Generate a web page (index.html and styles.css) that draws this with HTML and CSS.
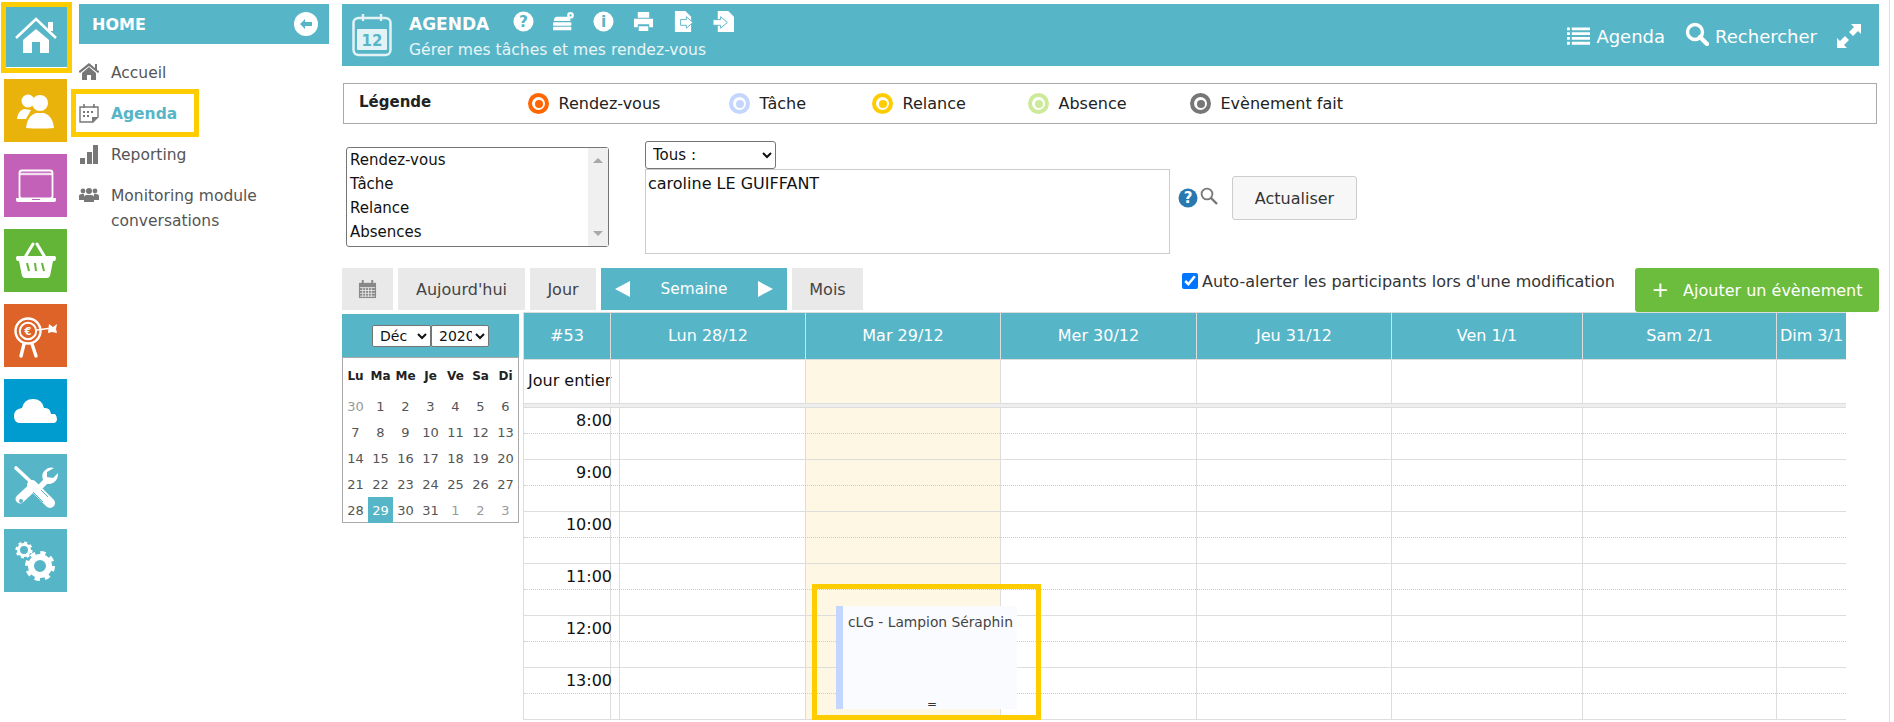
FILE: index.html
```html
<!DOCTYPE html>
<html lang="fr">
<head>
<meta charset="utf-8">
<title>Agenda</title>
<link rel="stylesheet" href="styles.css">
</head>
<body>
<div class="app">
  <nav class="rail">
    <a class="tile teal current"><svg viewBox="0 0 63 63"><path d="M12 34 32 15l20 19" class="ws" stroke-width="2.6"/><path d="M44 18h5v9h-5z" class="wf"/><path d="M19 36 32 25l13 11v13H36V38h-8v11h-9z" class="wf"/></svg><span class="frame home-frame"></span></a>
    <a class="tile amber"><svg viewBox="0 0 63 63"><circle cx="24" cy="22" r="6.5" class="wf"/><path d="M13 40c1-7 4-9 7-10l7 1-5 9z" class="wf"/><circle cx="36" cy="24" r="8" class="wf"/><path d="M22 49c1-8 4-13 10-15h8c6 2 9 7 10 15q-14 1-28 0z" class="wf"/></svg></a>
    <a class="tile purple"><svg viewBox="0 0 63 63"><rect x="15.500" y="16.500" width="33" height="28" rx="2.500" class="ws" stroke-width="1.800"/><path d="M16 20h32" class="ws" stroke-width="2.400" opacity=".8"/><path d="M12 44h40v2q0 2-2 2H14q-2 0-2-2z" class="wf"/><path d="M28 45h8v1h-8z" fill="#c360b8"/></svg></a>
    <a class="tile green"><svg viewBox="0 0 63 63"><path d="M20 30 29 15M33 15l9 15" class="ws" stroke-width="3" stroke-linecap="round"/><path d="M13 27h38q2 2 0 5h-2l-3 15q-1 2-3 2H21q-2 0-3-2l-3-15h-2q-2-3 0-5z" class="wf"/><path d="M23 34l2 8M31 34l1 8M38 34l2 8" stroke="#62b536" fill="none" stroke-width="2"/></svg></a>
    <a class="tile orange"><svg viewBox="0 0 63 63"><circle cx="24" cy="27" r="12.500" class="ws" stroke-width="2.400"/><circle cx="24" cy="27" r="8.200" class="ws" stroke-width="2"/><text x="24" y="31" class="euro">€</text><path d="M20 40l-3 12M28 40l4 12" class="ws" stroke-width="3.400" stroke-linecap="round"/><path d="M33 26 48 24" class="ws" stroke-width="1.600"/><path d="M45 20l4 3 4-3-1 5 1 4-5-1-4 1z" class="wf"/></svg></a>
    <a class="tile blue"><svg viewBox="0 0 63 63"><path d="M15 44q-5-1-5-7 0-7 8-8 2-9 11-9t11 9q6-1 7 6h4q2 2 2 5t-3 4z" class="wf"/></svg></a>
    <a class="tile teal"><svg viewBox="0 0 63 63"><path d="M12 14l15 14" class="ws" stroke-width="3.600" stroke-linecap="round"/><path d="M29 33 16 45" class="ws" stroke-width="9" stroke-linecap="round"/><circle cx="17" cy="47" r="2" fill="#57b5c8"/><path d="M28 31 46 49" class="ws" stroke-width="10" stroke-linecap="round"/><path d="M29 38l10 10M34 33l10 10" stroke="#57b5c8" fill="none" stroke-width="1"/><path d="M50 14a9 9 0 0 0-11 12L32 33l4 4 7-7a10 10 0 0 0 11-11l-5 5-6-1v-5z" class="wf"/></svg></a>
    <a class="tile teal"><svg viewBox="0 0 63 63"><circle cx="20" cy="21" r="5.500" class="ws" stroke-width="3"/><circle cx="20" cy="21" r="7.400" fill="none" stroke="#fff" stroke-width="2.400" stroke-dasharray="3 2.800"/><circle cx="36" cy="37" r="9" class="ws" stroke-width="6"/><circle cx="36" cy="37" r="13" fill="none" stroke="#fff" stroke-width="4" stroke-dasharray="5.200 5"/></svg></a>
  </nav>

  <aside class="side">
    <header class="side-head"><strong>HOME</strong>
      <svg class="back" viewBox="0 0 24 24"><circle cx="12" cy="12" r="12" fill="#fff"/><path d="M6 12l5-5v3h7v4h-7v3z" fill="#57b5c8"/></svg>
    </header>
    <ul class="side-menu">
      <li><svg viewBox="0 0 20 20"><path d="M0 9 10 1l6 5V2h2v6l2 1v1l-1 1-9-7-9 7-1-1z" class="gf"/><path d="M3 11l7-6 7 6v7h-5v-5H8v5H3z" class="gf"/></svg><span>Accueil</span></li>
      <li class="active"><svg viewBox="0 0 20 20"><path d="M1 4h18v10l-5 5H1z" fill="none" stroke="#777" stroke-width="1.400"/><path d="M5 1v4M15 1v4" stroke="#777" stroke-width="1.600"/><path d="M4 8h2v2H4zM8 8h2v2H8zM12 8h2v2h-2zM4 12h2v2H4zM8 12h2v2H8z" class="gf"/><path d="M13 19v-5h6z" class="gf"/></svg><span>Agenda</span><span class="frame agenda-frame"></span></li>
      <li><svg viewBox="0 0 20 20"><path d="M1 14h5v6H1zM8 8h5v12H8zM14 1h5v19h-5z" class="gf"/></svg><span>Reporting</span></li>
      <li><svg viewBox="0 0 20 20"><circle cx="4" cy="6" r="2.400" class="gf"/><circle cx="16" cy="6" r="2.400" class="gf"/><circle cx="10" cy="6" r="3" class="gf"/><path d="M0 15v-4q0-2 3-2h2v6zM20 15v-4q0-2-3-2h-2v6z" class="gf"/><path d="M5 17v-5q0-2 3-2h4q3 0 3 2v5z" class="gf"/></svg><span>Monitoring module conversations</span></li>
    </ul>
  </aside>

  <main class="main">
    <header class="banner">
      <svg class="banner-cal" viewBox="0 0 40 44"><rect x="1.500" y="5" width="37" height="37" rx="5" fill="none" stroke="#e2f2f5" stroke-width="2.500"/><path d="M11 1v7M29 1v7" stroke="#e2f2f5" stroke-width="2.400"/><rect x="5" y="16" width="30" height="21" rx="1" fill="#e2f2f5"/><text x="20" y="33" class="cal-num">12</text></svg>
      <div class="banner-text">
        <div class="banner-top"><strong>AGENDA</strong>
          <div class="tools">
            <svg viewBox="0 0 22 22"><circle cx="11" cy="11" r="10.500" fill="#fff"/><text x="11" y="17" class="glyph">?</text></svg>
            <svg viewBox="0 0 24 22"><path d="M1 10.500q0-5 4-5h11q4 0 4 5z" class="wf"/><rect x="0" y="11.800" width="21" height="4" rx="1" class="wf"/><rect x="0" y="17" width="21" height="4" rx="1" class="wf"/><circle cx="20" cy="4" r="3.800" class="wf"/><circle cx="20" cy="4" r="1.200" fill="#57b5c8"/></svg>
            <svg viewBox="0 0 22 22"><circle cx="11" cy="11" r="10.500" fill="#fff"/><text x="11" y="17" class="glyph">i</text></svg>
            <svg viewBox="0 0 22 22"><path d="M5 1h12v6H5zM1 8h20v9h-4v-3H5v3H1zM6 16h10v5H6z" class="wf"/></svg>
            <svg viewBox="0 0 22 22"><path d="M2 0h11l6 6v16H2z" class="wf"/><path d="M8 9h6V6l7 6-7 6v-3H8z" class="wf" stroke="#57b5c8"/></svg>
            <svg viewBox="0 0 22 22"><path d="M5 0h11l6 6v16H5z" class="wf"/><path d="M0 9h8V6l7 6-7 6v-3H0z" class="wf" stroke="#57b5c8"/></svg>
          </div>
        </div>
        <div class="banner-sub">Gérer mes tâches et mes rendez-vous</div>
      </div>
      <div class="banner-right">
        <a><svg class="ico-list" viewBox="0 0 24 20"><path d="M0 1h3v3H0zM5 1h19v3H5zM0 6h3v3H0zM5 6h19v3H5zM0 11h3v3H0zM5 11h19v3H5zM0 16h3v3H0zM5 16h19v3H5z" class="wf"/></svg>Agenda</a>
        <a><svg class="ico-search" viewBox="0 0 24 24"><circle cx="10" cy="10" r="7.500" fill="none" stroke="#fff" stroke-width="3.400"/><path d="M15 15l7 7" stroke="#fff" stroke-width="4.400" stroke-linecap="round"/></svg>Rechercher</a>
        <svg class="ico-expand" viewBox="0 0 24 24"><path d="M14 0h10v10l-3-3-5 5-4-4 5-5zM0 24V14l3 3 5-5 4 4-5 5 3 3z" class="wf"/></svg>
      </div>
    </header>

    <section class="legend">
      <strong class="legend-title">Légende</strong>
      <span class="leg l-rdv"><i class="dot"></i>Rendez-vous</span>
      <span class="leg l-task"><i class="dot"></i>Tâche</span>
      <span class="leg l-rel"><i class="dot"></i>Relance</span>
      <span class="leg l-abs"><i class="dot"></i>Absence</span>
      <span class="leg l-done"><i class="dot"></i>Evènement fait</span>
    </section>

    <section class="filters">
      <div class="types">
        <ul><li>Rendez-vous</li><li>Tâche</li><li>Relance</li><li>Absences</li></ul>
        <div class="scroll"><b class="up"></b><b class="down"></b></div>
      </div>
      <div class="people">
        <select class="tous"><option>Tous :</option></select>
        <div class="people-box">caroline LE GUIFFANT</div>
      </div>
      <svg class="help" viewBox="0 0 20 20"><circle cx="10" cy="10" r="9.500" fill="#2a78b0"/><text x="10" y="15" class="helpq">?</text></svg>
      <svg class="zoomer" viewBox="0 0 18 18"><circle cx="7" cy="7" r="5.400" fill="none" stroke="#777" stroke-width="1.800"/><path d="M11 11l6 6" stroke="#777" stroke-width="2.400"/></svg>
      <button class="refresh">Actualiser</button>
    </section>

    <section class="bar">
      <div class="views">
        <button class="vbtn ic"><svg viewBox="0 0 20 20"><rect x="1" y="3" width="18" height="16" fill="#888"/><path d="M5 0v4M15 0v4" stroke="#888" stroke-width="2"/><path d="M2 8h16M2 11h16M2 14h16M2 17h16M5 8v10M8 8v10M11 8v10M14 8v10" stroke="#e9e9e9" stroke-width=".9"/></svg></button>
        <button class="vbtn b-today">Aujourd'hui</button>
        <button class="vbtn b-day">Jour</button>
        <div class="week"><i class="tri left"></i><span>Semaine</span><i class="tri right"></i></div>
        <button class="vbtn b-month">Mois</button>
      </div>
      <label class="alert"><input type="checkbox" checked>Auto-alerter les participants lors d'une modification</label>
      <button class="add"><span class="plus">+</span>Ajouter un évènement</button>
    </section>

    <section class="cal-zone">
      <div class="mini">
        <div class="mini-head"><select class="m-month"><option>Déc</option></select><select class="m-year"><option>2020</option></select></div>
        <div class="mini-body">
          <b>Lu</b><b>Ma</b><b>Me</b><b>Je</b><b>Ve</b><b>Sa</b><b>Di</b>
          <span class="off">30</span><span>1</span><span>2</span><span>3</span><span>4</span><span>5</span><span>6</span>
          <span>7</span><span>8</span><span>9</span><span>10</span><span>11</span><span>12</span><span>13</span>
          <span>14</span><span>15</span><span>16</span><span>17</span><span>18</span><span>19</span><span>20</span>
          <span>21</span><span>22</span><span>23</span><span>24</span><span>25</span><span>26</span><span>27</span>
          <span>28</span><span class="sel">29</span><span>30</span><span>31</span><span class="off">1</span><span class="off">2</span><span class="off">3</span>
        </div>
      </div>

      <div class="grid">
        <div class="g-row g-head"><div class="c-wk">#53</div><div class="c-mon">Lun 28/12</div><div>Mar 29/12</div><div>Mer 30/12</div><div>Jeu 31/12</div><div>Ven 1/1</div><div>Sam 2/1</div><div>Dim 3/1</div></div>
        <div class="g-row g-all"><div class="label">Jour entier</div><div></div><div></div><div class="today"></div><div></div><div></div><div></div><div></div><div></div></div>
        <div class="g-sep"></div>
        <div class="g-row g-hour"><div class="hr">8:00</div><div></div><div></div><div class="today"></div><div></div><div></div><div></div><div></div><div></div></div>
        <div class="g-row g-hour"><div class="hr">9:00</div><div></div><div></div><div class="today"></div><div></div><div></div><div></div><div></div><div></div></div>
        <div class="g-row g-hour"><div class="hr">10:00</div><div></div><div></div><div class="today"></div><div></div><div></div><div></div><div></div><div></div></div>
        <div class="g-row g-hour"><div class="hr">11:00</div><div></div><div></div><div class="today"></div><div></div><div></div><div></div><div></div><div></div></div>
        <div class="g-row g-hour"><div class="hr">12:00</div><div></div><div></div><div class="today"></div><div></div><div></div><div></div><div></div><div></div></div>
        <div class="g-row g-hour"><div class="hr">13:00</div><div></div><div></div><div class="today"></div><div></div><div></div><div></div><div></div><div></div></div>
        <div class="event"><span class="ev-title">cLG - Lampion Séraphin</span><span class="ev-eq">=</span></div>
        <div class="frame event-frame"></div>
      </div>
    </section>
  </main>
  <div class="page-scroll"></div>
</div>
</body>
</html>
```
FILE: styles.css
```css
* { box-sizing: border-box; }
html, body { margin: 0; padding: 0; height: 722px; overflow: hidden; background: #fff; }
body { font-family: "DejaVu Sans", sans-serif; font-size: 15px; color: #222; }
ul { list-style: none; margin: 0; padding: 0; }
svg { display: block; flex: none; }
.wf { fill: #fff; }
.ws { fill: none; stroke: #fff; }
.gf { fill: #777; }
.frame { position: absolute; border: 5px solid #fc0; pointer-events: none; }

.app { display: flex; height: 722px; padding-top: 4px; }
.rail { width: 79px; flex: none; padding-left: 4px; display: flex; flex-direction: column; gap: 12px; }
.tile { position: relative; display: block; width: 63px; height: 63px; flex: none; }
.tile svg { width: 63px; height: 63px; }
.euro { font: 700 10px "DejaVu Sans", sans-serif; text-anchor: middle; fill: #fff; }
.teal { background: #57b5c8; }
.amber { background: #eab30c; }
.purple { background: #c360b8; }
.green { background: #62b536; }
.orange { background: #de6328; }
.blue { background: #009ccf; }
.home-frame { top: -2px; left: -3px; right: -5px; bottom: -6px; }

.side { width: 250px; flex: none; }
.side-head { height: 40px; background: #57b5c8; color: #fff; display: flex; align-items: center; justify-content: space-between; padding: 0 11px 0 13px; }
.side-head strong { font-size: 16px; }
.back { width: 24px; height: 24px; }
.side-menu { padding-top: 17px; }
.side-menu li { position: relative; display: flex; gap: 12px; color: #555; font-size: 15.5px; line-height: 25px; padding-bottom: 16px; }
.side-menu li svg { width: 20px; height: 20px; margin-top: 1px; }
.side-menu li span { width: 190px; }
.side-menu .active { color: #57b5c8; font-weight: 700; }
.agenda-frame.frame { width: 128px; top: -13px; left: -8px; height: 48px; }

.main { width: 1537px; flex: none; margin-left: 13px; }
.banner { height: 62px; background: #57b5c8; color: #fff; display: flex; align-items: flex-start; padding-left: 10px; }
.banner-cal { width: 40px; height: 44px; margin-top: 9px; }
.cal-num { font: 700 15px "DejaVu Sans", sans-serif; text-anchor: middle; fill: #57b5c8; }
.banner-text { margin-left: 17px; padding-top: 5px; flex: 1; }
.banner-top { display: flex; align-items: flex-start; height: 31px; }
.banner-top strong { font-size: 17px; line-height: 30px; width: 104px; }
.tools { display: flex; gap: 19px; padding-top: 2px; }
.tools svg { width: 21px; height: 21px; }
.glyph { font: 700 16px "DejaVu Sans", sans-serif; text-anchor: middle; fill: #57b5c8; }
.banner-sub { font-size: 15.6px; line-height: 20px; color: #e9f5f7; }
.banner-right { display: flex; align-items: center; height: 62px; padding-right: 18px; font-size: 18px; padding-bottom: 3px; padding-top: 5px; }
.banner-right a { display: flex; align-items: center; gap: 6px; margin-right: 20px; }
.ico-list { width: 23px; height: 20px; margin-left: 2px; }
.ico-search { width: 24px; height: 24px; margin-top: -4px; }
.ico-expand { width: 24px; height: 24px; }

.legend { position: relative; margin-top: 17px; margin-left: 1px; width: 1534px; height: 41px; border: 1px solid #aaa; display: flex; align-items: center; font-size: 16px; color: #222; padding-left: 15px; }
.legend-title { width: 169px; font-size: 15px; margin-top: -3px; }
.leg { display: flex; align-items: center; gap: 9.5px; }
.dot { display: block; width: 21px; height: 21px; border-radius: 50%; border: 4px solid; position: relative; }
.dot::after { content: ""; position: absolute; inset: 2.5px; border-radius: 50%; background: currentColor; }
.l-rdv { width: 201px; } .l-rdv .dot { color: #f60; }
.l-task { width: 143px; } .l-task .dot { color: #c3d6fd; }
.l-rel { width: 156px; } .l-rel .dot { color: #fc0; }
.l-abs { width: 162px; } .l-abs .dot { color: #cdea9a; }
.l-done .dot { color: #777; }

.filters { display: flex; align-items: flex-start; height: 127px; margin-top: 17px; position: relative; }
.types { margin: 6px 0 0 4px; width: 263px; height: 100px; border: 1px solid #767676; border-radius: 3px; display: flex; font-size: 15px; }
.types ul { flex: 1; padding: 0 0 0 3px; color: #111; }
.types li { height: 24px; line-height: 24px; }
.scroll { width: 20px; background: #f0f0f0; position: relative; }
.scroll b { position: absolute; left: 5px; border-left: 5px solid transparent; border-right: 5px solid transparent; }
.up { top: 10px; border-bottom: 5px solid #a8a8a8; }
.down { bottom: 10px; border-top: 5px solid #a8a8a8; }
.people { margin-left: 36px; width: 525px; }
.tous { display: block; width: 131px; height: 28px; font: 15px "DejaVu Sans", sans-serif; background: #fff; border: 1px solid #767676; border-radius: 3px; padding-left: 3px; color: #111; }
.people-box { height: 85px; border: 1px solid #ccc; padding: 4px 2px; font-size: 16px; color: #111; }
.help { width: 20px; height: 20px; margin: 47px 0 0 8px; }
.helpq { font: 700 15px "DejaVu Sans", sans-serif; text-anchor: middle; fill: #fff; }
.zoomer { width: 18px; height: 18px; margin: 46px 0 0 2px; }
.refresh { margin: 35px 0 0 14px; width: 125px; height: 44px; background: #f7f7f7; border: 1px solid #ccc; border-radius: 3px; font: 16px "DejaVu Sans", sans-serif; color: #333; }

.bar { display: flex; align-items: flex-start; height: 44px; }
.views { display: flex; gap: 5px; width: 840px; }
.vbtn { height: 42px; background: #e9e9e9; border: 0; padding: 0; font: 16px "DejaVu Sans", sans-serif; color: #444; }
.vbtn.ic { width: 51px; display: flex; align-items: center; justify-content: center; }
.vbtn.ic svg { width: 19px; height: 19px; }
.b-today { width: 127px; }
.b-day { width: 66px; }
.b-month { width: 71px; }
.week { width: 186px; height: 42px; background: #57b5c8; color: #fff; display: flex; align-items: center; justify-content: space-between; padding: 0 14px; font-size: 15.3px; }
.tri { display: block; border-top: 8px solid transparent; border-bottom: 8px solid transparent; }
.tri.left { border-right: 15px solid #fff; }
.tri.right { border-left: 15px solid #fff; }
.alert { display: flex; align-items: center; gap: 4px; height: 26px; font-size: 16px; color: #333; white-space: nowrap; width: 453px; }
.alert input { margin: 0; width: 16px; height: 16px; accent-color: #0075ff; }
.add { width: 244px; height: 44px; background: #6cbd3d; color: #fff; border: 0; border-radius: 3px; font: 16px "DejaVu Sans", sans-serif; display: flex; align-items: center; justify-content: center; gap: 14px; }
.plus { font-size: 21px; line-height: 1; }

.cal-zone { display: flex; gap: 4px; }
.mini { width: 177px; flex: none; margin-top: 2px; }
.mini-head { height: 43px; background: #57b5c8; display: flex; justify-content: center; align-items: center; padding-right: 0; }
.mini-head select { height: 22px; font: 14px "DejaVu Sans", sans-serif; background: #fff; border: 1px solid #767676; border-radius: 2px; padding: 0 0 0 3px; color: #111; }
.m-month { width: 59px; }
.m-year { width: 58px; margin-left: 0; }
.mini-body { border: 1px solid #aaa; height: 166px; display: grid; grid-template-columns: repeat(7, 1fr); grid-template-rows: 35px repeat(5, 26px); text-align: center; font-size: 13px; color: #555; }
.mini-body b, .mini-body span { display: flex; align-items: center; justify-content: center; }
.mini-body b { color: #222; font-size: 12px; }
.mini-body .off { color: #999; }
.mini-body .sel { background: #57b5c8; color: #fff; }

.grid { position: relative; width: 1323px; flex: none; border-left: 1px solid #ddd; }
.g-row { display: grid; grid-template-columns: 86px 9px 186px 195px 196px 195px 191px 194px 70px; border-bottom: 1px solid #ddd; }
.g-row > div { border-left: 1px solid #ddd; }
.g-row > div:first-child { border-left: 0; }
.g-head { grid-template-columns: 86px 195px 195px 196px 195px 191px 194px 70px; height: 48px; background: #57b5c8; color: #fff; border-top: 1px solid #ddd; border-bottom: 1px solid #ddd; font-size: 16px; text-align: center; }
.g-head > div { display: flex; align-items: center; justify-content: center; white-space: nowrap; padding-bottom: 1px; }
.g-all { height: 44px; font-size: 16px; color: #111; }
.g-row .label { white-space: nowrap; padding: 11px 0 0 4px; }
.g-sep { height: 4px; background: #eee; border-bottom: 1px solid #ddd; }
.g-hour { position: relative; height: 52px; font-size: 16px; color: #111; }
.g-hour::after { content: ""; position: absolute; left: 0; right: 0; top: 25px; border-top: 1px dotted #ccc; }
.hr { position: relative; z-index: 1; text-align: right; margin-right: -2px; padding-top: 3px; }
.g-row .today { background: #fdf7e3; }
.event { position: absolute; left: 312px; top: 294px; width: 181px; height: 103px; background: #fafbff; border-left: 7px solid #c3d6fd; font-size: 13.8px; color: #444; }
.ev-title { position: absolute; left: 5px; top: 8px; white-space: nowrap; }
.ev-eq { position: absolute; left: 84px; bottom: -2px; font-size: 12px; line-height: 14px; color: #333; }
.event-frame.frame { left: 288px; top: 272px; width: 229px; height: 136px; }
.page-scroll { position: absolute; left: 1889px; top: 0; width: 5px; height: 722px; border-left: 1px solid #ddd; background: #fff; }
```
